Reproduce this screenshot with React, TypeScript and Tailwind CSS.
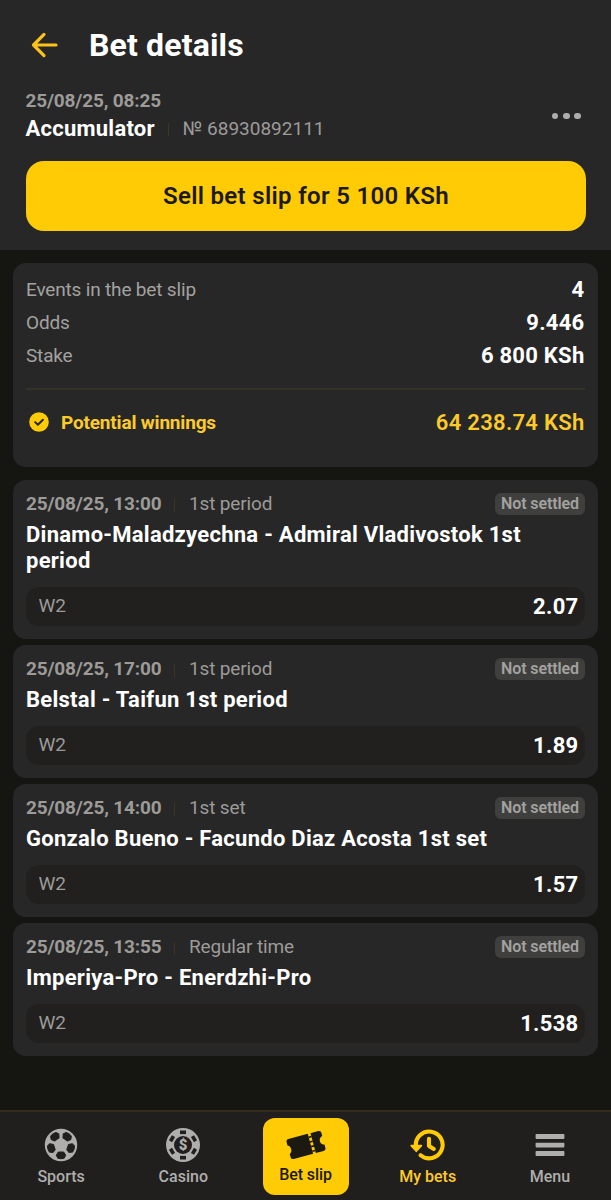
import React from "react";

type Selection = {
  date: string;
  stage: string;
  title: string;
  pick: string;
  odds: string;
};

const selections: Selection[] = [
  {
    date: "25/08/25, 13:00",
    stage: "1st period",
    title: "Dinamo-Maladzyechna - Admiral Vladivostok 1st period",
    pick: "W2",
    odds: "2.07",
  },
  { date: "25/08/25, 17:00", stage: "1st period", title: "Belstal - Taifun 1st period", pick: "W2", odds: "1.89" },
  { date: "25/08/25, 14:00", stage: "1st set", title: "Gonzalo Bueno - Facundo Diaz Acosta 1st set", pick: "W2", odds: "1.57" },
  { date: "25/08/25, 13:55", stage: "Regular time", title: "Imperiya-Pro - Enerdzhi-Pro", pick: "W2", odds: "1.538" },
];

const summary = [
  { label: "Events in the bet slip", value: "4" },
  { label: "Odds", value: "9.446" },
  { label: "Stake", value: "6 800 KSh" },
];

function BackIcon() {
  return (
    <svg className="h-[26px] w-[28px]" viewBox="0 0 28 26" fill="none" stroke="#fcc419" strokeWidth="3.2" strokeLinecap="round" strokeLinejoin="round">
      <path d="M25 13H2.7M13 2.4 2.5 13 13 23.6" />
    </svg>
  );
}

function CheckIcon() {
  return (
    <svg className="size-5" viewBox="0 0 20 20">
      <circle cx="10" cy="10" r="9.8" fill="#ffcb05" />
      <path d="m6.2 10.1 2.7 2.7 5-5" fill="none" stroke="#272727" strokeWidth="2" strokeLinecap="round" strokeLinejoin="round" />
    </svg>
  );
}

function BallIcon() {
  return (
    <svg className="size-[34px]" viewBox="-17 -17 34 34">
      <circle r="16.2" fill="#aeaeac" />
      {[0, 72, 144, 216, 288].map((a) => (
        <path
          key={a}
          transform={`rotate(${a})`}
          d="M-2.7 7H2.7L4.7 10.2 3.2 13.2Q0 14.3-3.2 13.2L-4.7 10.2Z"
          fill="#211f1e"
          stroke="#211f1e"
          strokeWidth="1"
          strokeLinejoin="round"
        />
      ))}
    </svg>
  );
}

function ChipIcon() {
  return (
    <svg className="size-[34px]" viewBox="-17 -17 34 34">
      <circle r="17" fill="#aeaeac" />
      {[0, 60, 120, 180, 240, 300].map((a) => (
        <rect key={a} transform={`rotate(${a})`} x="-3" y="-14.5" width="6" height="3.6" fill="#211f1e" />
      ))}
      <circle r="9" fill="#211f1e" />
      <text x="0" y="5.2" textAnchor="middle" fontSize="15" fontWeight="900" fill="#aeaeac" fontFamily="Roboto, sans-serif">
        $
      </text>
    </svg>
  );
}

function TicketIcon() {
  return (
    <svg className="h-[30px] w-[40px]" viewBox="-20 -15 40 30">
      <g transform="rotate(-15)">
        <path
          d="M-15.5-10.3H4.6V10.3H-15.5Q-18 10.3-18 7.8V4.4C-14.5 3.4-14.5-3.4-18-4.4V-7.8Q-18-10.3-15.5-10.3Z"
          fill="#1b1912"
        />
        <path d="M7.4-10.3H15.5Q18-10.3 18-7.8V-4.4C13.2-3.4 13.2 3.4 18 4.4V7.8Q18 10.3 15.5 10.3H7.4Z" fill="#1b1912" />
        <path d="M6-7.5V9" stroke="#1b1912" strokeWidth="3" strokeDasharray="1.6 3.2" />
      </g>
    </svg>
  );
}

function HistoryIcon() {
  return (
    <svg className="h-[34px] w-[36px]" viewBox="0 0 36 34">
      <g fill="none" stroke="#ffcb05" strokeWidth="4.1" strokeLinecap="round" strokeLinejoin="round">
        <path d="M5.9 18.5A13.4 13.4 0 1 1 10.6 27.2" />
        <path d="M19 10.9V18.1L23.8 20.9" />
      </g>
      <path d="M1.2 17.6H11.4L6.3 23.3Z" fill="#ffcb05" stroke="#ffcb05" strokeWidth="1.6" strokeLinejoin="round" />
    </svg>
  );
}

function MenuIcon() {
  return (
    <svg className="h-[34px] w-[30px]" viewBox="0 0 30 34" fill="#aeaeac">
      <rect x="0.6" y="6" width="28.8" height="5" rx="0.8" />
      <rect x="0.6" y="14.8" width="28.8" height="4.6" rx="0.8" />
      <rect x="0.6" y="23" width="28.8" height="5" rx="0.8" />
    </svg>
  );
}

function Header() {
  return (
    <header className="h-[250px] shrink-0 bg-[#272727] px-[25.5px]">
      <div className="flex h-[90px] items-center pl-[5.5px]">
        <BackIcon />
        <h1 className="ml-[30px] text-[32px] leading-[40px] font-bold tracking-[0.15px]">Bet details</h1>
      </div>
      <div className="flex h-[71px] items-start justify-between">
        <div>
          <div className="h-[25px] text-[19px] leading-[22px] font-bold tracking-[-0.16px] text-[#9c9b98]">25/08/25, 08:25</div>
          <div className="flex items-center text-[22px] leading-[28px] font-bold">
            <span className="tracking-[0.24px]">Accumulator</span>
            <span className="ml-[13px] h-[13px] w-px bg-[#3c3523]" />
            <span className="ml-[14px] text-[19px] font-normal text-[#9c9b98]">№ 68930892111</span>
          </div>
        </div>
        <div className="mt-[22.5px] mr-[4.5px] flex gap-[4.8px]">
          <span className="size-[6.6px] rounded-full bg-[#aeaeac]" />
          <span className="size-[6.6px] rounded-full bg-[#aeaeac]" />
          <span className="size-[6.6px] rounded-full bg-[#aeaeac]" />
        </div>
      </div>
      <button className="flex h-[70px] w-full items-center justify-center rounded-[18px] bg-[#ffcb05] pl-px text-[24px] font-semibold tracking-[0.32px] text-[#1b1912]">
        Sell bet slip for 5 100 KSh
      </button>
    </header>
  );
}

function SummaryCard() {
  return (
    <section className="h-[204px] rounded-[13px] bg-[#272727] px-[13px] pt-[10px]">
      {summary.map((row) => (
        <div key={row.label} className="flex h-[33px] items-center justify-between">
          <span className="pt-[2px] text-[19px] tracking-[-0.17px] text-[#a3a2a0]">{row.label}</span>
          <span className="pr-[0.5px] text-[22px] font-bold tracking-[0.26px]">{row.value}</span>
        </div>
      ))}
      <div className="mt-[16px] h-[2px] bg-[#343126]" />
      <div className="flex h-[66px] items-center text-[#fccb2a]">
        <div className="mb-[2px] ml-[3px] flex">
          <CheckIcon />
        </div>
        <span className="ml-[12px] text-[19px] font-bold tracking-[-0.18px]">Potential winnings</span>
        <span className="mb-px ml-auto pr-[0.5px] text-[22px] font-semibold tracking-[0.3px]">64 238.74 KSh</span>
      </div>
    </section>
  );
}

function SelectionCard({ item }: { item: Selection }) {
  return (
    <article className="rounded-[13px] bg-[#272727] px-[13px] pt-[13px] pb-[13px]">
      <div className="flex h-[22px] items-center text-[19px] text-[#9c9b98]">
        <span className="font-bold tracking-[-0.16px]">{item.date}</span>
        <span className="mt-[2px] ml-[13px] h-[13px] w-px bg-[#3c3523]" />
        <span className="ml-[13.5px] tracking-[-0.14px]">{item.stage}</span>
        <span className="ml-auto flex h-[22px] w-[90px] items-center justify-center rounded-[6px] bg-[#3f3f3d] text-[16px] font-semibold tracking-[-0.12px] text-[#a3a2a0]">
          Not settled
        </span>
      </div>
      <h2 className="mt-[7px] text-[22px] leading-[26px] font-bold tracking-[0.27px]">{item.title}</h2>
      <div className="mt-[13px] flex h-[39px] items-center justify-between rounded-[13px] bg-[#21201e] pr-[6.5px] pl-[12.5px]">
        <span className="text-[19px] tracking-[-0.2px] text-[#9c9b98]">{item.pick}</span>
        <span className="text-[22px] font-bold tracking-[0.3px]">{item.odds}</span>
      </div>
    </article>
  );
}

function NavItem({ icon, label, className }: { icon: React.ReactNode; label: string; className: string }) {
  return (
    <a className={`flex flex-1 flex-col items-center pt-[16px] text-[16px] leading-[20px] font-medium ${className}`}>
      {icon}
      <span className="mt-[5px]">{label}</span>
    </a>
  );
}

function BottomNav() {
  return (
    <nav className="mt-auto flex h-[90px] shrink-0 border-t-2 border-[#332c1c] bg-[#211f1e]">
      <NavItem icon={<BallIcon />} label="Sports" className="text-[#aeaeac]" />
      <NavItem icon={<ChipIcon />} label="Casino" className="text-[#aeaeac]" />
      <div className="flex flex-1 justify-center pt-[6px]">
        <a className="flex h-[77px] w-[86px] flex-col items-center rounded-[12px] bg-[#ffcb05] pt-[12px] text-[16px] leading-[20px] font-medium text-[#1b1912]">
          <TicketIcon />
          <span className="mt-[5px] tracking-[-0.1px]">Bet slip</span>
        </a>
      </div>
      <NavItem icon={<HistoryIcon />} label="My bets" className="text-[#ffcb2a]" />
      <NavItem icon={<MenuIcon />} label="Menu" className="text-[#aeaeac]" />
    </nav>
  );
}

export default function App() {
  return (
    <div className="flex h-[1200px] w-full flex-col overflow-hidden bg-[#151512] font-['Roboto',sans-serif] text-white">
      <Header />
      <main className="flex flex-col px-[13px] pt-[13px]">
        <SummaryCard />
        <div className="mt-[13px] flex flex-col gap-[6px]">
          {selections.map((item) => (
            <SelectionCard key={item.date} item={item} />
          ))}
        </div>
      </main>
      <BottomNav />
    </div>
  );
}
